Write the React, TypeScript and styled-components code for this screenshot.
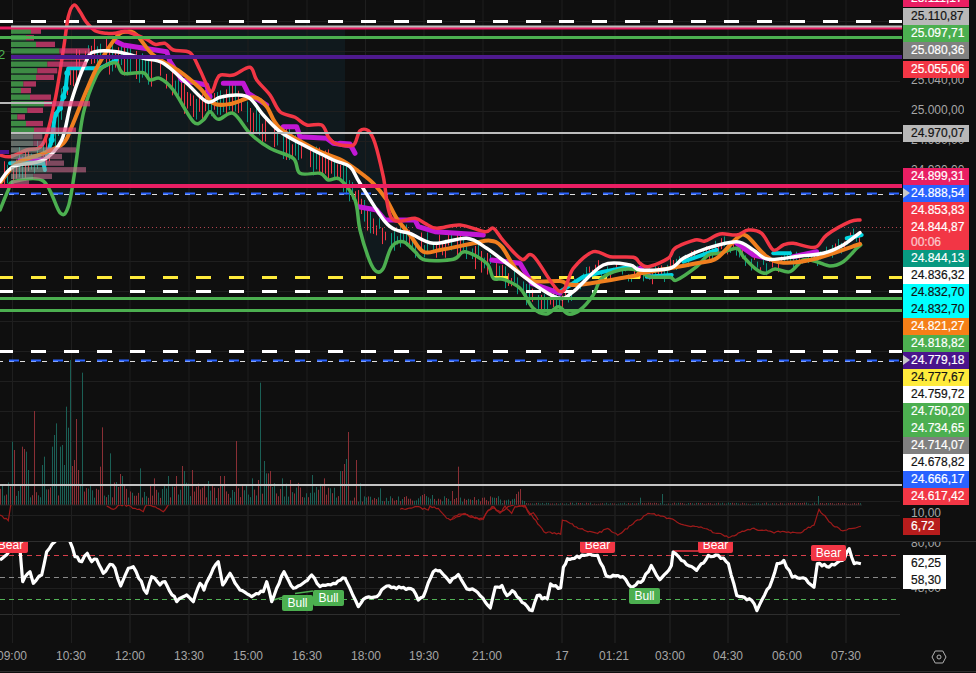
import React from 'react';
import styled, { createGlobalStyle } from 'styled-components';

type Pt = [number, number];

const GlobalStyle = createGlobalStyle`
    html, body {
        margin: 0;
        padding: 0;
        background: #0f0f0f;
    }
`;

// traced from zoomed crops: offset + coords / scale
const tr = (ox: number, oy: number, s: number, flat: number[]): Pt[] => {
    const out: Pt[] = [];
    for (let i = 0; i < flat.length; i += 2) out.push([ox + flat[i] / s, oy + flat[i + 1] / s]);
    return out;
};

const smooth = (p: Pt[]) => {
    let d = `M${p[0][0].toFixed(1)} ${p[0][1].toFixed(1)}`;
    for (let i = 0; i < p.length - 1; i++) {
        const a = p[Math.max(i - 1, 0)], b = p[i], c = p[i + 1], e = p[Math.min(i + 2, p.length - 1)];
        const c1 = [b[0] + (c[0] - a[0]) / 6, b[1] + (c[1] - a[1]) / 6];
        const c2 = [c[0] - (e[0] - b[0]) / 6, c[1] - (e[1] - b[1]) / 6];
        d += `C${c1[0].toFixed(1)} ${c1[1].toFixed(1)} ${c2[0].toFixed(1)} ${c2[1].toFixed(1)} ${c[0].toFixed(1)} ${c[1].toFixed(1)}`;
    }
    return d;
};

const straight = (p: Pt[]) => p.map((q, i) => `${i ? 'L' : 'M'}${q[0].toFixed(1)} ${q[1].toFixed(1)}`).join('');

// seeded so the picture stays the same between runs
let seed = 20240817;
const rnd = () => {
    seed = (seed * 1664525 + 1013904223) % 4294967296;
    return seed / 4294967296;
};

// break a traced line into short noisy steps, the way a raw indicator looks
const jagged = (p: Pt[], step: number, amp: number): Pt[] => {
    const out: Pt[] = [];
    for (let i = 0; i < p.length - 1; i++) {
        const n = Math.max(1, Math.round((p[i + 1][0] - p[i][0]) / step));
        for (let k = 0; k < n; k++) {
            const t = k / n;
            const noise = k === 0 ? 0 : (rnd() - 0.5) * amp;
            out.push([p[i][0] + (p[i + 1][0] - p[i][0]) * t, p[i][1] + (p[i + 1][1] - p[i][1]) * t + noise]);
        }
    }
    out.push(p[p.length - 1]);
    return out;
};

const redBand: Pt[] = [
    ...tr(0, 0, 3, [0, 465, 30, 470, 80, 450, 130, 430, 165, 300, 190, 150, 205, 50, 222, 15, 240, 35, 258, 65, 285, 92, 320, 100, 345, 100, 380, 95, 440, 118, 465, 133, 495, 130, 520, 150, 570, 158, 600, 210, 632, 275, 650, 240, 662, 225, 700, 225, 750, 202, 770, 240, 810, 285, 840, 335, 885, 352, 920, 375, 965, 375, 985, 410, 1005, 430, 1050, 437]),
    ...tr(340, 120, 3, [45, 70, 60, 32, 85, 32, 105, 70, 130, 170, 155, 295, 225, 295, 255, 310, 290, 325, 360, 315, 435, 335, 460, 325, 490, 362, 545, 418, 580, 408, 660, 515, 700, 445, 760, 395, 810, 410, 880, 412]),
    ...tr(640, 170, 3, [0, 280, 25, 290, 85, 265, 105, 235, 165, 210, 195, 213, 240, 192, 290, 195, 325, 180, 365, 190, 400, 240, 430, 225, 460, 220, 525, 232, 560, 195, 630, 155, 660, 150]),
];

const greenBand: Pt[] = [
    ...tr(0, 0, 3, [0, 630, 25, 570, 40, 545, 130, 543, 180, 638, 205, 620, 225, 510, 250, 340, 290, 225, 320, 195, 350, 190, 370, 220, 430, 218, 450, 240, 480, 235, 520, 270, 580, 365, 610, 360, 630, 335, 655, 358, 700, 340, 750, 400, 810, 445, 880, 475, 900, 520, 960, 520, 985, 540, 1020, 538]),
    ...tr(340, 120, 3, [45, 240, 60, 330, 90, 425, 110, 455, 130, 445, 155, 380, 190, 365, 225, 395, 255, 420, 340, 418, 375, 395, 440, 430, 460, 475, 490, 478, 540, 505, 580, 565, 620, 582, 655, 560, 685, 582, 720, 570, 760, 525, 785, 475, 840, 450, 890, 450]),
    ...tr(640, 170, 3, [30, 320, 90, 322, 110, 330, 170, 290, 205, 255, 240, 250, 290, 235, 310, 260, 345, 295, 375, 310, 405, 297, 450, 305, 490, 270, 530, 275, 570, 288, 610, 275, 650, 235, 662, 225]),
];

const whiteAvg: Pt[] = [
    ...tr(0, 0, 3, [0, 545, 40, 500, 130, 480, 185, 420, 215, 300, 260, 180, 285, 155, 350, 155, 430, 175, 490, 190, 560, 250, 620, 305, 660, 292, 710, 285, 750, 295, 790, 345, 840, 395, 900, 430, 1000, 480]),
    ...tr(340, 120, 3, [30, 140, 60, 190, 135, 305, 175, 332, 210, 340, 280, 370, 380, 355, 440, 385, 520, 445, 600, 505, 660, 535, 700, 515, 790, 435, 870, 435]),
    ...tr(640, 170, 3, [0, 300, 90, 295, 130, 265, 200, 235, 290, 215, 340, 240, 385, 268, 480, 258, 550, 250, 610, 225, 660, 188]),
];

const orangeAvg: Pt[] = [
    ...tr(0, 0, 3, [0, 550, 50, 490, 130, 460, 190, 430, 215, 380, 260, 270, 295, 195, 350, 110, 380, 95, 410, 105, 460, 165, 540, 215, 600, 265, 640, 310, 690, 312, 760, 292, 800, 320, 840, 385, 950, 450]),
    ...tr(340, 120, 3, [0, 118, 50, 150, 100, 190, 140, 240, 170, 295, 210, 345, 250, 395, 300, 390, 400, 370, 450, 362, 485, 380, 530, 450, 580, 483, 660, 483, 710, 495, 880, 468]),
    ...tr(640, 170, 3, [0, 310, 90, 295, 170, 280, 230, 265, 290, 205, 320, 198, 380, 260, 430, 278, 520, 268, 660, 222]),
];

const cyanRuns: Pt[][] = [
    tr(0, 0, 3, [30, 490, 130, 488, 135, 510]),
    tr(0, 0, 3, [140, 470, 155, 420, 165, 345, 180, 325, 190, 290, 197, 265, 202, 220, 205, 205, 300, 205, 350, 180]),
    tr(640, 170, 3, [20, 320, 95, 315]),
    tr(640, 170, 3, [130, 275, 230, 240]),
    tr(640, 170, 3, [400, 250, 450, 250]),
    tr(640, 170, 3, [620, 205, 665, 195]),
    tr(340, 120, 3, [660, 515, 730, 470, 790, 455, 870, 440]),
];

const cyanDots: Pt[] = tr(0, 0, 3, [155, 420, 165, 345, 180, 325, 190, 290, 197, 265, 202, 220]);

const magentaRuns: Pt[][] = [
    tr(0, 0, 3, [60, 480, 130, 480]),
    tr(0, 0, 3, [350, 125, 370, 135, 500, 155, 510, 185, 530, 215, 545, 240, 620, 255, 630, 290]),
    tr(0, 0, 3, [670, 250, 730, 250, 745, 280, 800, 315]),
    tr(0, 0, 3, [850, 380, 890, 380, 900, 410, 980, 415, 1000, 430, 1050, 437]),
    tr(340, 120, 3, [0, 70, 30, 72, 45, 100]),
    tr(340, 120, 3, [55, 260, 110, 270, 135, 300, 225, 300, 235, 320, 285, 335, 430, 345]),
    tr(340, 120, 3, [455, 420, 540, 430, 575, 490, 660, 520]),
    tr(640, 170, 3, [0, 295, 30, 320]),
    tr(640, 170, 3, [290, 220, 340, 255, 385, 265]),
    tr(640, 170, 3, [460, 260, 530, 245]),
];

const oscLine: Pt[] = jagged([
    ...tr(0, 500, 3, [0, 180, 35, 150, 60, 148, 68, 245, 90, 215, 100, 250, 125, 225, 140, 155, 165, 125, 172, 100, 205, 100, 210, 125, 225, 170, 245, 185, 262, 160, 275, 185, 290, 178, 310, 220, 330, 193, 345, 205, 362, 258, 385, 205, 400, 200, 440, 280, 455, 230, 480, 255, 495, 245, 530, 305, 560, 285, 580, 305, 600, 250, 612, 270, 640, 205, 655, 185, 668, 255, 690, 220, 720, 270, 755, 290, 790, 275, 800, 245, 815, 305, 830, 265, 852, 215, 880, 265, 915, 245, 935, 225, 960, 260, 1000, 250, 1035, 235, 1050, 265, 1075, 320, 1090, 298, 1130, 290, 1160, 258, 1240, 270, 1255, 300, 1270, 290, 1300, 215, 1320, 212, 1345, 240]),
    ...tr(450, 500, 2.981, [0, 245, 25, 222, 50, 265, 75, 270, 120, 322, 135, 260, 155, 255, 170, 285, 185, 270, 215, 305, 245, 330, 260, 285, 290, 295, 300, 250, 330, 262, 338, 200, 350, 175, 400, 165, 440, 165, 465, 225, 515, 228, 540, 260, 575, 240, 600, 195, 625, 238, 660, 195, 665, 155, 690, 180, 735, 210, 770, 165, 800, 165, 830, 190, 855, 285, 900, 300, 915, 330, 960, 240, 975, 190, 995, 180, 1020, 230, 1060, 235, 1085, 260, 1095, 190, 1130, 200, 1170, 180, 1190, 145, 1205, 190, 1225, 190]),
], 2.5, 3.2);

const atrRuns: Pt[][] = [
    tr(0, 500, 3, [0, 45, 25, 62, 33, 10]),
    tr(0, 500, 3, [320, 18, 340, 28, 360, 14, 385, 16, 405, 25, 430, 35, 440, 14, 460, 20, 490, 35, 505, 15]),
    tr(400, 450, 3, [0, 178, 45, 170, 85, 180, 90, 168, 115, 175, 140, 205, 155, 208, 165, 198, 195, 190, 225, 205, 250, 208, 265, 180, 285, 175, 300, 190, 315, 168, 335, 190, 345, 170, 375, 165, 390, 195, 400, 188, 415, 210]),
    tr(450, 500, 2.981, [0, 60, 40, 42, 95, 58, 125, 20, 150, 35, 180, 18, 195, 10, 225, 20, 280, 95, 330, 102, 335, 60, 400, 90, 440, 100, 470, 85, 500, 105, 540, 75, 590, 40, 640, 50, 700, 75, 760, 85, 830, 112, 900, 85, 960, 95, 1040, 98, 1085, 75, 1100, 28, 1130, 65, 1165, 90, 1225, 78]),
].map(run => jagged(run, 2, 2.2));

const sampleY = (p: Pt[], x: number) => {
    for (let i = 0; i < p.length - 1; i++) {
        if (x >= p[i][0] && x <= p[i + 1][0]) {
            const t = (x - p[i][0]) / Math.max(p[i + 1][0] - p[i][0], 0.01);
            return p[i][1] + (p[i + 1][1] - p[i][1]) * t;
        }
    }
    return p[p.length - 1][1];
};

const candles = Array.from({ length: 286 }, (_, i) => {
    const x = 4 + i * 3;
    const span = x < 360 ? 12 + rnd() * 20 : x < 560 ? 8 + rnd() * 16 : 4 + rnd() * 9;
    const mid = sampleY(whiteAvg, Math.min(x + 10, 860)) + (rnd() - 0.1) * 12;
    return { x, top: mid - span / 2, bottom: mid + span / 2, up: rnd() > 0.5, skip: rnd() < 0.12 };
}).filter(c => !c.skip);

const tallBars: Record<number, [number, boolean]> = {};
tr(0, 340, 3, [37, 305, 85, 390, 133, 350, 127, 375, 157, 320, 160, 285, 166, 250, 178, 320, 184, 315, 190, 375, 196, 200, 202, 263, 208, 60, 244, 98, 331, 340, 420, 385, 501, 408, 549, 393, 778, 128, 790, 363, 796, 400, 844, 415, 937, 405, 1020, 393, 1038, 357, 1080, 430, 1137, 445, 367, 408, 625, 423, 757, 415, 79, 335]).forEach(([x, y]) => { tallBars[Math.round(x / 2) * 2] = [y, true]; });
tr(0, 340, 3, [43, 330, 67, 320, 73, 327, 103, 213, 214, 378, 220, 360, 226, 237, 232, 390, 298, 380, 304, 408, 307, 262, 361, 402, 463, 415, 544, 378, 526, 408, 574, 390, 661, 408, 673, 408, 709, 303, 772, 420, 802, 400, 808, 393, 868, 420, 973, 415, 1026, 393, 1032, 372, 1045, 276, 1069, 360]).forEach(([x, y]) => { tallBars[Math.round(x / 2) * 2] = [y, false]; });
tr(400, 450, 3, [175, 50, 157, 123, 361, 117, 354, 125, 346, 132, 72, 132, 66, 135]).forEach(([x, y]) => { tallBars[Math.round(x / 2) * 2] = [y, false]; });
tr(400, 450, 3, [96, 135, 722, 143, 787, 132, 1252, 138, 373, 153, 54, 145]).forEach(([x, y]) => { tallBars[Math.round(x / 2) * 2] = [y, true]; });

const volumes = Array.from({ length: 431 }, (_, i) => {
    const x = i * 2;
    const hit = tallBars[x];
    if (hit) return { x, top: hit[0], up: hit[1] };
    const h = x < 350 ? 7 + rnd() * 16 : x < 400 ? 3 + rnd() * 6 : x < 526 ? 2 + rnd() * 7 : 1 + rnd() * 1.4;
    return { x, top: 505 - h, up: rnd() > 0.5 };
});

// [green end, pink end] in crop coordinates, one pair per row
const profileRows: [number, number, boolean][] = [
    [93, 123, false], [78, 102, false], [108, 165, false], [178, 270, false], [165, 255, false],
    [142, 260, false], [112, 172, false], [108, 162, false], [70, 108, false], [63, 93, false],
    [90, 153, false], [132, 270, false], [82, 129, false], [52, 75, false], [78, 129, false],
    [102, 228, false], [100, 127, true], [100, 132, true], [140, 228, true], [125, 186, true],
    [135, 192, true], [140, 258, true], [100, 156, true], [40, 87, true],
];

const timeMarks = [12.5, 71.5, 130, 189, 248, 307, 365.5, 424, 483, 562, 615, 670, 728, 787, 846];
const timeLabels: [string, number][] = [['09:00', 12], ['10:30', 71], ['12:00', 130], ['13:30', 189], ['15:00', 248], ['16:30', 307], ['18:00', 366], ['19:30', 424], ['21:00', 487], ['17', 562], ['01:21', 614], ['03:00', 670], ['04:30', 728], ['06:00', 787], ['07:30', 846]];

const TIME_CELL = 40;

type AxisItem =
    | { kind: 'tag'; text: string; bg: string; fg: string; gap?: number; marker?: boolean; sub?: string }
    | { kind: 'scale'; height: number; shift: number; labels: string[] };

const WHITE_TXT = '#ffffff';
const DARK_TXT = '#131313';
const tag = (text: string, bg: string, fg: string, extra: { gap?: number; marker?: boolean; sub?: string } = {}): AxisItem => ({ kind: 'tag', text, bg, fg, ...extra });

const axisItems: AxisItem[] = [
    tag('25.111,17', '#e91e63', WHITE_TXT, { gap: -10 }),
    tag('25.110,87', '#b8b8b8', DARK_TXT, { gap: 1 }),
    tag('25.097,71', '#4caf50', WHITE_TXT),
    tag('25.080,36', '#808080', WHITE_TXT),
    tag('25.055,06', '#f23645', WHITE_TXT, { gap: 2 }),
    { kind: 'scale', height: 47, shift: -6, labels: ['25.040,00', '25.000,00'] },
    tag('24.970,07', '#b8b8b8', DARK_TXT),
    { kind: 'scale', height: 26, shift: -10, labels: ['24.960,00', '24.920,00'] },
    tag('24.899,31', '#e91e63', WHITE_TXT),
    tag('24.888,54', '#2962ff', WHITE_TXT, { marker: true }),
    tag('24.853,83', '#f23645', WHITE_TXT),
    tag('24.844,87', '#f23645', WHITE_TXT, { sub: '00:06' }),
    tag('24.844,13', '#089981', WHITE_TXT),
    tag('24.836,32', '#ffffff', DARK_TXT),
    tag('24.832,70', '#00ffff', DARK_TXT),
    tag('24.832,70', '#00ffff', DARK_TXT),
    tag('24.821,27', '#f57f17', WHITE_TXT),
    tag('24.818,82', '#4caf50', WHITE_TXT),
    tag('24.779,18', '#4a148c', WHITE_TXT, { marker: true }),
    tag('24.777,67', '#ffeb3b', DARK_TXT),
    tag('24.759,72', '#ffffff', DARK_TXT),
    tag('24.750,20', '#4caf50', WHITE_TXT),
    tag('24.734,65', '#4caf50', WHITE_TXT),
    tag('24.714,07', '#808080', WHITE_TXT),
    tag('24.678,82', '#ffffff', DARK_TXT),
    tag('24.666,17', '#2962ff', WHITE_TXT),
    tag('24.617,42', '#f23645', WHITE_TXT),
];

const Screen = styled.div`
    width: 976px;
    height: 673px;
    display: grid;
    grid-template-columns: 900px 76px;
    grid-template-rows: 505px 36px 102px 28px 2px;
    background: #0f0f0f;
    font-family: "Liberation Sans", Arial, sans-serif;
    overflow: hidden;
`;

const Pane = styled.div<{ $divider?: boolean }>`
    position: relative;
    min-width: 0;
    ${props => props.$divider && 'border-top: 1px solid #2e2e2e;'}
`;

const PriceAxis = styled.div<{ $divider?: boolean; $clip?: boolean }>`
    display: flex;
    flex-direction: column;
    align-items: flex-start;
    padding-left: 3px;
    overflow: ${props => (props.$clip ? 'hidden' : 'visible')};
    ${props => props.$divider && 'border-top: 1px solid #2e2e2e;'}
`;

const ChartSvg = styled.svg`
    display: block;
    overflow: visible;
`;

const ClippedSvg = styled(ChartSvg)`
    overflow: hidden;
`;

const ScaleRow = styled.div<{ $height: number; $shift: number }>`
    height: ${props => props.$height}px;
    flex: none;
    overflow: hidden;
    display: flex;
    flex-direction: column;
    gap: 13px;
    padding-left: 8px;
    & > :first-child {
        margin-top: ${props => props.$shift}px;
    }
`;

const ScaleLabel = styled.span`
    display: block;
    flex: none;
    height: 17px;
    line-height: 17px;
    font-size: 12px;
    color: #a6a6a6;
    white-space: nowrap;
`;

const SmallScaleLabel = styled(ScaleLabel)<{ $shift?: number; $gap?: number }>`
    margin-left: 8px;
    margin-top: ${props => props.$shift ?? 0}px;
    margin-bottom: ${props => props.$gap ?? 0}px;
`;

const PriceTag = styled.div<{ $gap?: number; $bg: string; $fg: string; $width?: number; $tall?: boolean; $marker?: boolean }>`
    position: relative;
    flex: none;
    margin-top: ${props => props.$gap ?? 0}px;
    width: ${props => props.$width ?? 66}px;
    height: ${props => (props.$tall ? 31 : 17)}px;
    box-sizing: border-box;
    padding-left: 8px;
    font-size: 12px;
    line-height: 17px;
    white-space: nowrap;
    background: ${props => props.$bg};
    color: ${props => props.$fg};
    -webkit-text-stroke: 0.2px currentColor;
    ${props => props.$marker && `
        &::before {
            content: '';
            position: absolute;
            left: 0;
            top: 3px;
            border-left: 7px solid #c9c9c9;
            border-top: 5px solid transparent;
            border-bottom: 5px solid transparent;
        }
    `}
`;

const Countdown = styled.div`
    line-height: 13px;
    opacity: 0.72;
`;

const EdgeLabel = styled.span`
    position: absolute;
    left: -2px;
    top: 47px;
    font-size: 13px;
    color: #4caf50;
`;

const SignalTag = styled.div<{ $left: number; $top: number; $bear?: boolean }>`
    position: absolute;
    left: ${props => props.$left}px;
    top: ${props => props.$top}px;
    width: ${props => (props.$bear ? 35 : 31)}px;
    height: 16px;
    border-radius: 2px;
    background: ${props => (props.$bear ? '#f23645' : '#4caf50')};
    color: #ffffff;
    font-size: 12px;
    line-height: 16px;
    text-align: center;
`;

const OscClip = styled.div`
    position: absolute;
    inset: 0;
    overflow: hidden;
`;

const TimeAxis = styled.div`
    display: flex;
    align-items: center;
    padding-bottom: 1px;
    overflow: hidden;
`;

const TimeCell = styled.span<{ $gap: number }>`
    flex: none;
    width: ${TIME_CELL}px;
    margin-left: ${props => props.$gap}px;
    text-align: center;
    font-size: 12px;
    line-height: 17px;
    color: #a6a6a6;
`;

const Corner = styled.div`
    display: flex;
    align-items: center;
    justify-content: center;
    color: #b4b4b4;
    padding-left: 1px;
`;

const BottomEdge = styled.div`
    grid-column: 1 / 3;
    border-top: 1px solid #2e2e2e;
`;

const VerticalGrid = () => (
    <>
        {timeMarks.map(x => <line key={x} x1={x} x2={x} y1={0} y2={643} stroke="#1f1f1f" strokeWidth={1} />)}
    </>
);

const dashProps = { strokeDasharray: '15 18', strokeDashoffset: 2 };

const DashedLevel = ({ y, color }: { y: number; color: string }) => (
    <line x1={0} x2={902} y1={y} y2={y} stroke={color} strokeWidth={3} {...dashProps} />
);

const BlueLevel = ({ y }: { y: number }) => (
    <>
        <line x1={0} x2={902} y1={y + 0.5} y2={y + 0.5} stroke="#e0e0e0" strokeWidth={1} strokeDasharray="5 6" strokeDashoffset={2} />
        <line x1={9} x2={902} y1={y - 0.5} y2={y - 0.5} stroke="#2962ff" strokeWidth={2} strokeDasharray="10 12" />
    </>
);

const Band = ({ d, color, width }: { d: string; color: string; width: number }) => (
    <path d={d} fill="none" stroke={color} strokeWidth={width} strokeLinejoin="round" strokeLinecap="round" />
);

const bandFill = smooth(redBand) + 'L' + [...greenBand].reverse().map(p => `${p[0].toFixed(1)} ${p[1].toFixed(1)}`).join('L') + 'Z';

const MainChart = () => (
    <ChartSvg width={900} height={505} viewBox="0 0 900 505">
        <rect x={11} y={27} width={334} height={159} fill="#10191d" />
        <path d={bandFill} fill="#10191d" />
        {Array.from({ length: 17 }, (_, i) => (
            <line key={i} x1={0} x2={900} y1={21.5 + i * 30} y2={21.5 + i * 30} stroke="#1f1f1f" strokeWidth={1} />
        ))}
        <VerticalGrid />
        {volumes.map(v => (
            <line key={v.x} x1={v.x + 0.5} x2={v.x + 0.5} y1={v.top} y2={505} stroke={v.up ? '#1b5f55' : '#8a2f35'} strokeWidth={1} />
        ))}
        <line x1={0} x2={862} y1={505} y2={505} stroke="#2a2a2a" strokeWidth={1} />
        {candles.map(c => (
            <line key={c.x} x1={c.x + 0.5} x2={c.x + 0.5} y1={c.top} y2={c.bottom} stroke={c.up ? '#089981' : '#f23645'} strokeWidth={1} />
        ))}
        <line x1={0} x2={902} y1={227.5} y2={227.5} stroke="#b0434d" strokeWidth={1} strokeDasharray="1 3" />
        <DashedLevel y={21.5} color="#ffffff" />
        <DashedLevel y={277.5} color="#ffeb3b" />
        <DashedLevel y={291.5} color="#ffffff" />
        <DashedLevel y={351.5} color="#ffffff" />
        <BlueLevel y={194} />
        <BlueLevel y={361} />
        {magentaRuns.map((run, i) => <Band key={i} d={straight(run)} color="#c218d6" width={5} />)}
        {cyanRuns.map((run, i) => <Band key={i} d={straight(run)} color="#00d5e0" width={4} />)}
        {cyanDots.map((p, i) => <circle key={i} cx={p[0]} cy={p[1]} r={3} fill="#00d5e0" />)}
        <Band d={smooth(greenBand)} color="#4caf50" width={3.5} />
        <Band d={smooth(orangeAvg)} color="#ef7f1f" width={4} />
        <Band d={smooth(redBand)} color="#f23645" width={3.5} />
        <Band d={smooth(whiteAvg)} color="#ffffff" width={3.5} />
        {profileRows.map(([green, pink, faded], i) => {
            const y = 28.5 + i * 6.6;
            return (
                <g key={i}>
                    <rect x={11} y={y} width={green / 3 - 11} height={5.3} fill={faded ? 'rgba(150,160,150,0.62)' : 'rgba(76,175,80,0.76)'} />
                    <rect x={green / 3} y={y} width={(pink - green) / 3} height={5.3} fill={faded ? 'rgba(200,105,140,0.6)' : 'rgba(236,64,122,0.7)'} />
                </g>
            );
        })}
        <rect x={0} y={150} width={9} height={4} fill="#4a148c" />
        <rect x={0} y={102} width={52} height={2} fill="#b8b8b8" />
        <rect x={0} y={26.5} width={902} height={3} fill="#e91e63" />
        <rect x={11} y={25.5} width={891} height={2} fill="#bdbdbd" />
        <rect x={0} y={36} width={902} height={3} fill="#4caf50" />
        <rect x={11} y={55} width={891} height={4} fill="#4e1a8e" />
        <rect x={11} y={132} width={891} height={2} fill="#bdbdbd" />
        <rect x={0} y={184} width={902} height={4} fill="#e91e63" />
        <rect x={0} y={297} width={902} height={3} fill="#4caf50" />
        <rect x={0} y={309} width={902} height={3} fill="#4caf50" />
        <rect x={0} y={484} width={902} height={2} fill="#c4c4c4" />
    </ChartSvg>
);

const SubChart = () => (
    <ClippedSvg width={900} height={36} viewBox="0 505 900 36">
        <line x1={0} x2={900} y1={515.5} y2={515.5} stroke="#1f1f1f" strokeWidth={1} />
        <VerticalGrid />
        {atrRuns.map((run, i) => <path key={i} d={straight(run)} fill="none" stroke="#9e1a1a" strokeWidth={1.2} />)}
    </ClippedSvg>
);

const OscChart = () => (
    <ClippedSvg width={900} height={101} viewBox="0 542 900 101">
        {[588.5].map(y => <line key={y} x1={0} x2={900} y1={y} y2={y} stroke="#1f1f1f" strokeWidth={1} />)}
        <line x1={0} x2={900} y1={614.5} y2={614.5} stroke="#2e2e2e" strokeWidth={1} />
        <VerticalGrid />
        <line x1={0} x2={900} y1={555.5} y2={555.5} stroke="#d8404c" strokeWidth={1} strokeDasharray="5 4" />
        <line x1={0} x2={900} y1={577.5} y2={577.5} stroke="#8a8a8a" strokeWidth={1} strokeDasharray="5 4" />
        <line x1={0} x2={900} y1={599.5} y2={599.5} stroke="#53b357" strokeWidth={1} strokeDasharray="5 4" />
        <line x1={270} x2={282} y1={601} y2={597.5} stroke="#4caf50" strokeWidth={1.5} />
        <line x1={295} x2={313} y1={593.5} y2={591} stroke="#4caf50" strokeWidth={1.5} />
        <line x1={673} x2={698} y1={551} y2={551} stroke="#f23645" strokeWidth={1.5} />
        <path d={straight(oscLine)} fill="none" stroke="#ffffff" strokeWidth={3.2} strokeLinejoin="round" />
    </ClippedSvg>
);

const SettingsHex = () => (
    <svg width="16" height="14" viewBox="0 0 16 14" fill="none" stroke="currentColor" strokeWidth="1">
        <path d="M4.2 1h7.6L15 7l-3.2 6H4.2L1 7z" />
        <circle cx="8" cy="7" r="2" />
    </svg>
);

const App: React.FC = () => (
    <>
        <GlobalStyle />
        <Screen>
            <Pane>
                <MainChart />
                <EdgeLabel>2</EdgeLabel>
            </Pane>
            <PriceAxis>
                {axisItems.map((item, i) => item.kind === 'scale' ? (
                    <ScaleRow key={i} $height={item.height} $shift={item.shift}>
                        {item.labels.map(label => <ScaleLabel key={label}>{label}</ScaleLabel>)}
                    </ScaleRow>
                ) : (
                    <PriceTag key={i} $gap={item.gap} $bg={item.bg} $fg={item.fg} $tall={!!item.sub} $marker={item.marker}>
                        {item.text}
                        {item.sub && <Countdown>{item.sub}</Countdown>}
                    </PriceTag>
                ))}
            </PriceAxis>
            <Pane>
                <SubChart />
            </Pane>
            <PriceAxis $clip>
                <SmallScaleLabel $shift={0} $gap={-4}>10,00</SmallScaleLabel>
                <PriceTag $bg="#b71c1c" $fg="#ffffff" $width={37}>6,72</PriceTag>
            </PriceAxis>
            <Pane $divider>
                <OscChart />
                <OscClip>
                    <SignalTag $left={-7} $top={-5} $bear>Bear</SignalTag>
                    <SignalTag $left={580} $top={-5} $bear>Bear</SignalTag>
                    <SignalTag $left={698} $top={-5} $bear>Bear</SignalTag>
                    <SignalTag $left={811} $top={3} $bear>Bear</SignalTag>
                    <SignalTag $left={282} $top={53}>Bull</SignalTag>
                    <SignalTag $left={313} $top={48}>Bull</SignalTag>
                    <SignalTag $left={629} $top={46}>Bull</SignalTag>
                </OscClip>
            </Pane>
            <PriceAxis $divider $clip>
                <SmallScaleLabel $shift={-7} $gap={3}>80,00</SmallScaleLabel>
                <PriceTag $bg="#ffffff" $fg="#131313" $width={43}>62,25</PriceTag>
                <PriceTag $bg="#ffffff" $fg="#131313" $width={43}>58,30</PriceTag>
                <SmallScaleLabel $shift={-9}>48,00</SmallScaleLabel>
            </PriceAxis>
            <TimeAxis>
                {timeLabels.map(([text, x], i) => (
                    <TimeCell key={text} $gap={i === 0 ? x - TIME_CELL / 2 : x - timeLabels[i - 1][1] - TIME_CELL}>{text}</TimeCell>
                ))}
            </TimeAxis>
            <Corner>
                <SettingsHex />
            </Corner>
            <BottomEdge />
        </Screen>
    </>
);

export default App;
